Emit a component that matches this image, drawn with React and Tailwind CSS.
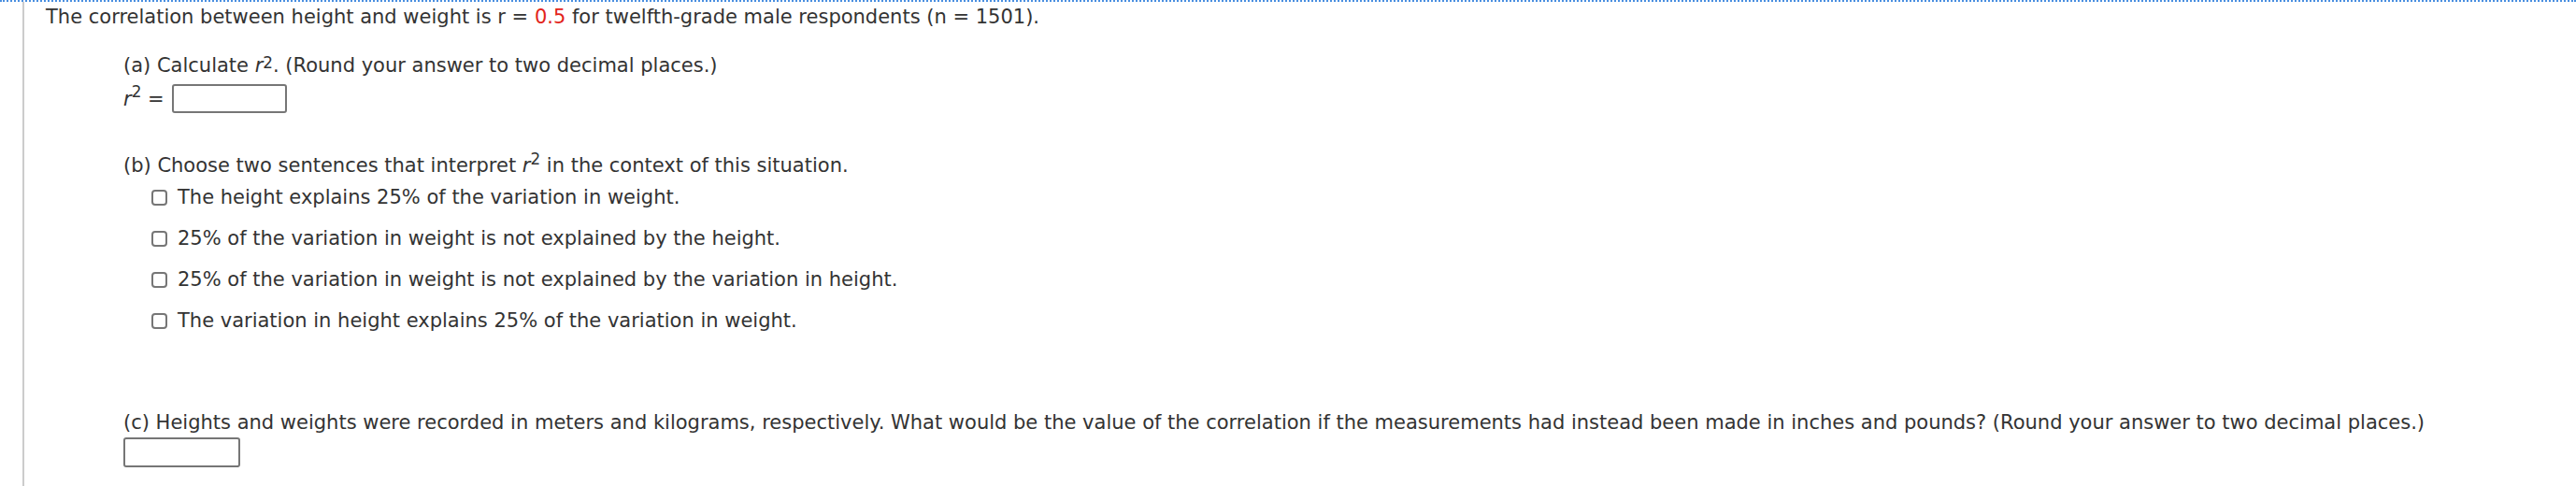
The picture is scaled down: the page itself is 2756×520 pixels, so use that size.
import React from "react";

const R2 = ({ high }) => (
  <span className="whitespace-nowrap">
    <i>r</i>
    <sup className={high ? "relative top-[-0.25em] text-[0.8em]" : "text-[0.8em]"}>2</sup>
  </span>
);

const Box = ({ className }) => (
  <span className={"inline-block align-middle border-2 border-[#767676] rounded-[3px] bg-white " + className} />
);

const Check = ({ children }) => (
  <div className="flex items-center gap-[11px]">
    <span className="inline-block w-[17px] h-[17px] border-2 border-[#767676] rounded-[4px] bg-white" />
    <span>{children}</span>
  </div>
);

export default function App() {
  return (
    <div className="w-[2756px] h-[520px] bg-white border-t-2 border-dotted border-[#4a8fe0] overflow-hidden">
      <div
        className="ml-[24px] h-full border-l-2 border-[#cccccc] pl-[23px] text-[#333333] text-[21px] leading-[28px]"
        style={{ fontFamily: '"DejaVu Sans", Verdana, sans-serif' }}
      >
        <p className="pt-[2px]">
          The correlation between height and weight is r = <span className="text-[#e2231a]">0.5</span> for twelfth-grade male respondents (n = 1501).
        </p>
        <div className="pl-[83px]">
          <p className="mt-[24px]">
            (a) Calculate <R2 high />. (Round your answer to two decimal places.)
          </p>
          <div className="flex items-center gap-[8px] mt-[6px]">
            <span>
              <R2 /> =
            </span>
            <Box className="w-[123px] h-[31px]" />
          </div>
          <p className="mt-[42px]">
            (b) Choose two sentences that interpret <R2 /> in the context of this situation.
          </p>
          <div className="pl-[30px] flex flex-col gap-[16px] mt-[6px]">
            <Check>The height explains 25% of the variation in weight.</Check>
            <Check>25% of the variation in weight is not explained by the height.</Check>
            <Check>25% of the variation in weight is not explained by the variation in height.</Check>
            <Check>The variation in height explains 25% of the variation in weight.</Check>
          </div>
          <p className="mt-[81px]">
            (c) Heights and weights were recorded in meters and kilograms, respectively. What would be the value of the correlation if the measurements had instead been made in inches and pounds? (Round your answer to two decimal places.)
          </p>
          <Box className="w-[125px] h-[32px] mt-[2px]" />
        </div>
      </div>
    </div>
  );
}
